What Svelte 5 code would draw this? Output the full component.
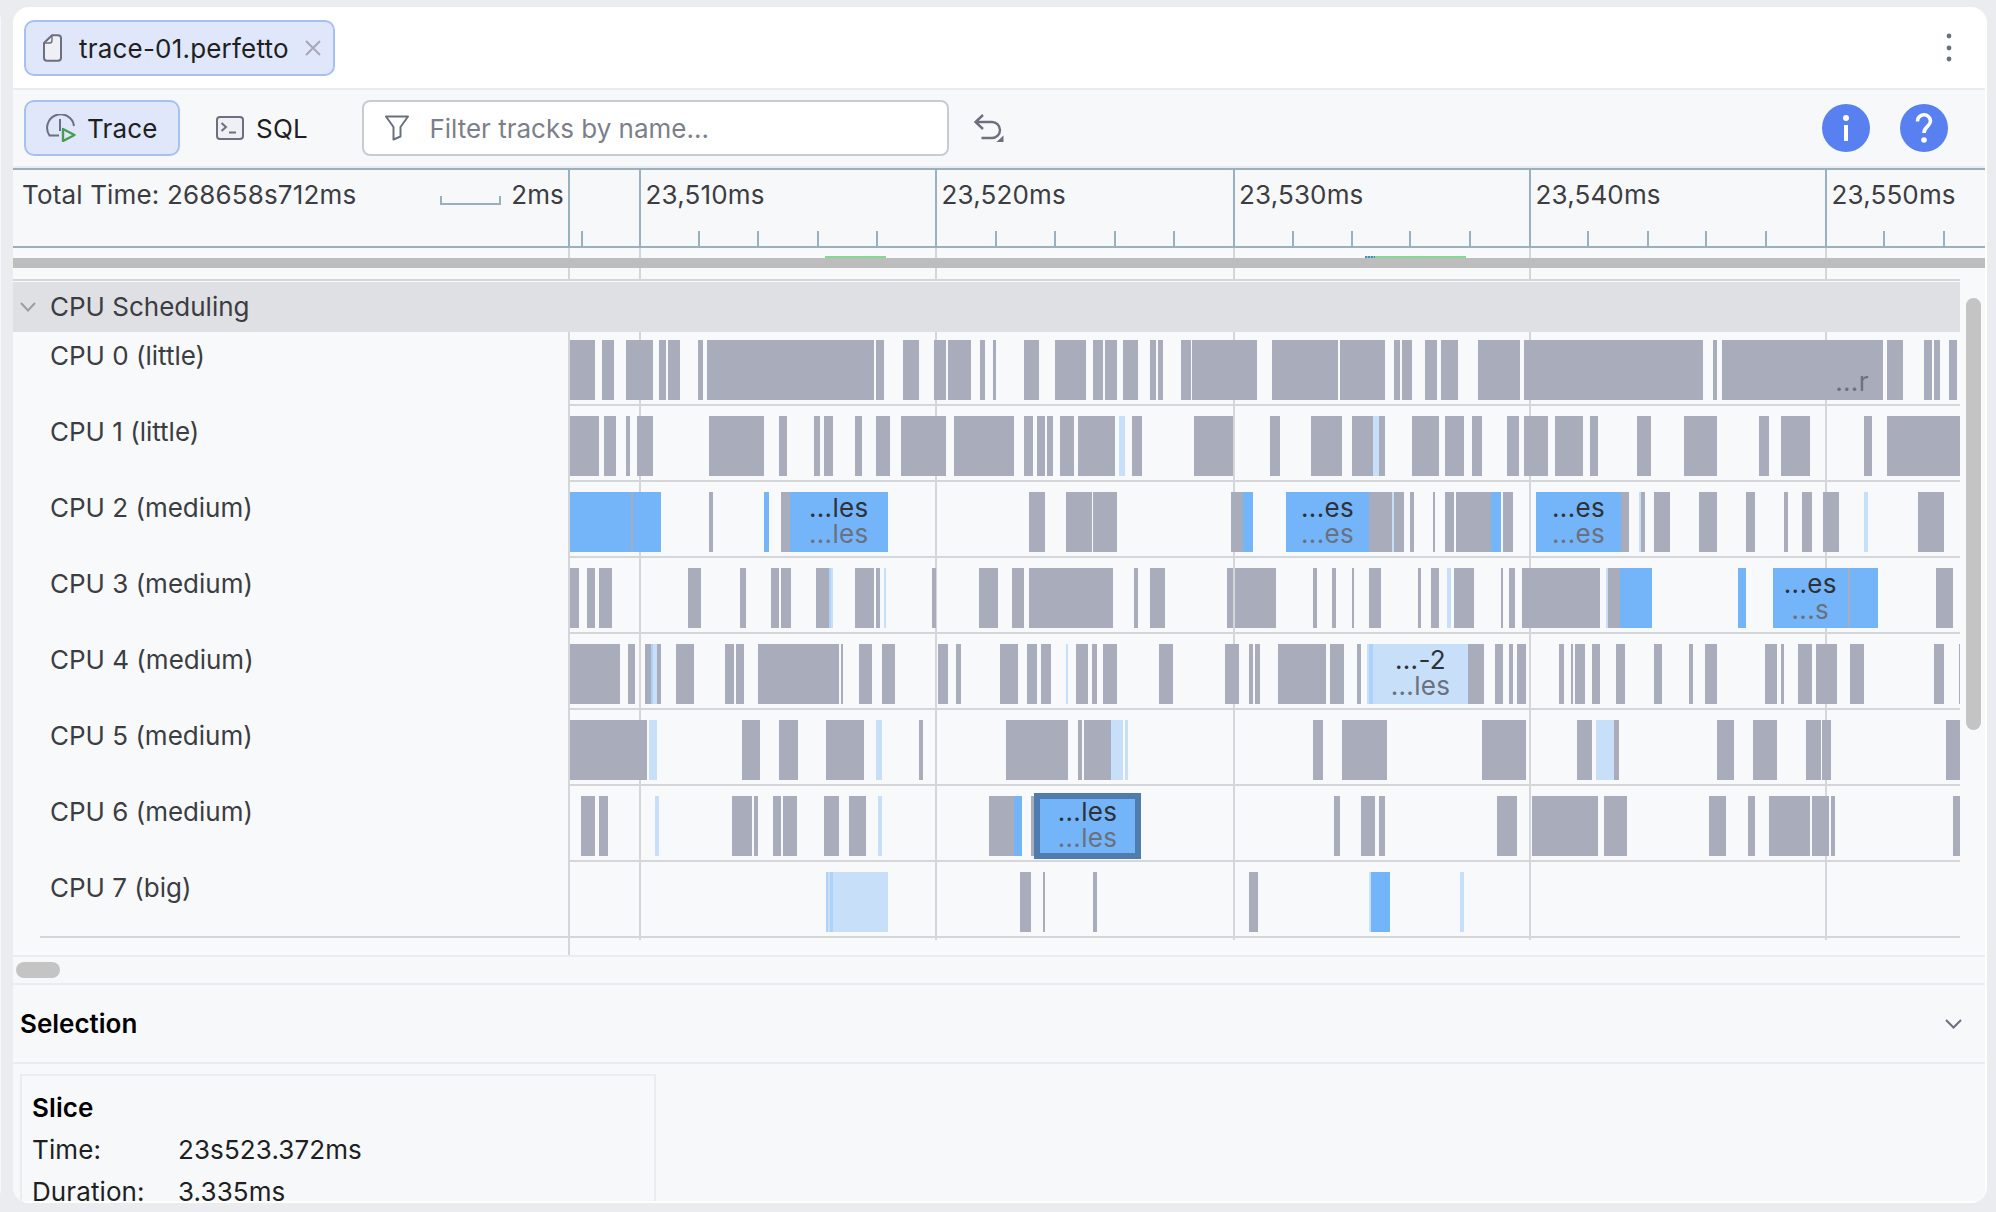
<script lang="ts">
  // page x of the left edge of the track canvas; slice data below is in page px
  const origin = 568;

  const majors = [
    { x: 640, label: "23,510ms" },
    { x: 936, label: "23,520ms" },
    { x: 1233.5, label: "23,530ms" },
    { x: 1530, label: "23,540ms" },
    { x: 1826, label: "23,550ms" },
  ];
  const minors = [
    581.6, 699, 758, 817.5, 877, 996, 1055, 1114.5, 1174, 1292.5, 1351.5, 1410,
    1470, 1588, 1648, 1705.6, 1766, 1884, 1944,
  ];

  type Slice = [number, number, string?, string?, string?];
  const g = "g", b = "b", l = "l", m = "m";

  const tracks: { name: string; slices: Slice[] }[] = [
    { name: "CPU 0 (little)", slices: [
      [570,595],[602,614],[626,653],[659,666],[668,680],[698,703],[707,874],[876,884],[903,919],
      [934,946],[948,971],[980,985],[993,996],[1024,1039],[1055,1086],[1093,1103],[1105,1117],
      [1123,1138],[1150,1156],[1158,1163],[1181,1191],[1192,1257],[1272,1338],[1340,1385],
      [1394,1400],[1402,1412],[1425,1437],[1441,1458],[1478,1520],[1524,1703],[1713,1717],
      [1722,1821],[1821,1883,g,"","...r"],[1887,1903],[1924,1932],[1934,1940],[1949,1957],
    ]},
    { name: "CPU 1 (little)", slices: [
      [570,599],[604,616],[626,630],[637,653],[709,764],[779,787],[814,820],[824,833],[855,862],
      [876,890],[901,946],[954,1014],[1024,1033],[1037,1045],[1047,1053],[1060,1074],[1078,1115],
      [1119,1125,l],[1132,1142],[1194,1233],[1270,1280],[1311,1342],[1352,1373],[1373,1379,l],
      [1379,1385],[1412,1439],[1445,1464],[1472,1482],[1507,1519],[1524,1548],[1555,1583],
      [1590,1598],[1637,1651],[1684,1717],[1759,1769],[1781,1810],[1864,1872],[1887,1960],
    ]},
    { name: "CPU 2 (medium)", slices: [
      [570,630.5,b],[630.5,633],[633,661,b],[709,713],[764,769,b],[781,789.5],
      [789.5,888,b,"...les","...les"],[1029,1045],[1066,1092],[1093,1117],[1231,1243],[1243,1253,b],
      [1286,1369,b,"...es","...es"],[1369,1392],[1392,1393.5,l],[1393.5,1404],[1410,1414],[1433,1435],
      [1445,1454],[1456,1491],[1491,1501,b],[1503,1513],[1536,1621,b,"...es","...es"],[1621,1629],
      [1639,1641,l],[1641,1645],[1654,1670],[1699,1717],[1746,1755],[1784,1788],[1802,1812],
      [1823,1839],[1864,1868,l],[1918,1944],
    ]},
    { name: "CPU 3 (medium)", slices: [
      [570,579],[587,595],[599,612],[688,701],[740,746],[771,779],[781,791],[816,829],[829,831,m],
      [831,833,l],[855,874],[876,880],[884,886,l],[932,936],[979,998],[1012,1024],[1029,1113],
      [1134,1138],[1150,1165],[1227,1233],[1234.5,1276],[1313,1317],[1332,1336],[1352,1354],
      [1369,1381],[1418,1421],[1431,1439],[1447,1451,l],[1454,1474],[1501,1503],[1509,1515],
      [1522,1600],[1606,1608,l],[1608,1620],[1620,1652,b],[1738,1746,b],
      [1773,1847.5,b,"...es","...s"],[1847.5,1850],[1850,1878,b],[1936,1953],
    ]},
    { name: "CPU 4 (medium)", slices: [
      [570,620],[628,635],[645,651],[651,653,m],[653,657,l],[657,661],[676,694],[725,734],[736,744],
      [758,839],[841,843],[859,872],[882,895],[938,948],[956,961],[1000,1018],[1027,1037],[1041,1051],
      [1066,1068,l],[1076,1088],[1092,1097],[1103,1117],[1159,1173],[1225,1239],[1249,1253],
      [1255,1260],[1278,1326],[1330,1344],[1357,1361],[1367,1369,l],[1369,1373,m],
      [1373,1468,l,"...-2","...les"],[1468,1484],[1495,1503],[1509,1513],[1517,1526],[1559,1564],
      [1571,1573],[1575,1585],[1592,1600],[1616,1625],[1654,1662],[1689,1693],[1705,1717],
      [1765,1777],[1781,1784],[1798,1812],[1816,1837],[1850,1864],[1934,1944],[1959,1960],
    ]},
    { name: "CPU 5 (medium)", slices: [
      [570,647],[649,657,l],[742,760],[779,798],[826,864],[876,882,l],[919,923],[1006,1068],
      [1078,1082],[1084,1111],[1111,1123,l],[1125,1128,l],[1313,1323],[1342,1387],[1482,1526],
      [1577,1592],[1596,1614,l],[1614,1619],[1717,1734],[1753,1777],[1806,1821],[1822,1831],
      [1946,1960],
    ]},
    { name: "CPU 6 (medium)", slices: [
      [581,595],[599,608],[655,659,l],[732,752],[754,758],[773,781],[783,797],[824,839],[849,866],
      [878,882,l],[989,1014],[1014,1022,b],[1031,1034],[1034,1141,"sel","...les","...les"],
      [1334,1340],[1361,1375],[1379,1385],[1497,1517],[1532,1598],[1604,1627],[1709,1726],
      [1748,1755],[1769,1810],[1812,1829],[1831,1835],[1953,1960],
    ]},
    { name: "CPU 7 (big)", slices: [
      [826,828,m],[828,830,l],[830,833,m],[833,888,l],[1020,1031],[1043,1045],[1093,1097],[1249,1258],
      [1369,1371,l],[1371,1390,b],[1460,1464,l],
    ]},
  ];
</script>

<div class="page">
  <div class="neighbor"></div>
  <main class="card">
    <header class="tabbar">
      <div class="tab">
        <svg width="19" height="28" viewBox="0 0 19 28" fill="#eef0f5" stroke="#6c707e" stroke-width="2">
          <path d="M9 1.2H15a3 3 0 0 1 3 3V23.8a3 3 0 0 1-3 3H4a3 3 0 0 1-3-3V9Z" stroke-linejoin="round" />
          <path d="M9 1.2V6.5a2.5 2.5 0 0 1-2.5 2.5H1" fill="none" stroke-width="1.4" />
        </svg>
        <span class="tab-name">trace-01.perfetto</span>
        <svg class="close" width="16" height="16" viewBox="0 0 16 16" stroke="#a6a9b4" stroke-width="2">
          <path d="M1 1L15 15M15 1L1 15" />
        </svg>
      </div>
      <svg class="kebab" width="6" height="30" viewBox="0 0 6 30" fill="#6c707e">
        <circle cx="3" cy="3" r="2.4" /><circle cx="3" cy="15" r="2.4" /><circle cx="3" cy="26" r="2.4" />
      </svg>
    </header>

    <div class="toolbar">
      <button class="mode active" type="button">
        <svg width="31" height="28" viewBox="0 0 31 28" fill="none">
          <path d="M14 21.5H4.5A13.5 13.5 0 1 1 29 12" stroke="#6c707e" stroke-width="2" />
          <path d="M15 5V17" stroke="#6c707e" stroke-width="2" />
          <path d="M18 15L29.5 21L18 27Z" stroke="#4a9a52" stroke-width="2.4" fill="#e0e7fb" stroke-linejoin="round" />
        </svg>
        <span>Trace</span>
      </button>
      <button class="mode" type="button">
        <svg width="28" height="24" viewBox="0 0 28 24" fill="none" stroke="#6c707e" stroke-width="2">
          <rect x="1" y="1" width="26" height="22" rx="3" fill="#eef0f5" />
          <path d="M5.5 7L10 11L5.5 15M13 16.5H20" />
        </svg>
        <span>SQL</span>
      </button>
      <label class="filter">
        <svg width="24" height="26" viewBox="0 0 24 26" fill="none" stroke="#6c707e" stroke-width="2">
          <path d="M1 1.5H23L15.5 12V21.5L8.5 24.5V12Z" stroke-linejoin="round" />
        </svg>
        <span class="placeholder">Filter tracks by name...</span>
      </label>
      <svg class="undo" width="30" height="28" viewBox="0 0 30 28" fill="none" stroke="#6c707e" stroke-width="2.4">
        <path d="M9 1L1.5 8L9 15M2 8H18A8 8 0 0 1 18 24H7.5" />
        <path d="M29.5 21.5V28H22.5Z" fill="#6c707e" stroke="none" />
      </svg>
      <span class="spacer"></span>
      <svg width="48" height="48" viewBox="0 0 48 48">
        <circle cx="24" cy="24" r="24" fill="#5880f0" />
        <circle cx="24" cy="14" r="3" fill="#fff" />
        <path d="M24 21V37" stroke="#fff" stroke-width="4" />
      </svg>
      <svg class="help" width="48" height="48" viewBox="0 0 48 48" fill="none">
        <circle cx="24" cy="24" r="24" fill="#5880f0" />
        <path d="M17.5 17.5A6.5 6.5 0 0 1 30.5 17C30.5 22.5 24 22.5 24 29" stroke="#fff" stroke-width="3.6" />
        <circle cx="24" cy="36" r="2.8" fill="#fff" />
      </svg>
    </div>

    <section class="ruler">
      <div class="ruler-info">
        <span>Total Time: 268658s712ms</span>
        <span class="scale"><i></i>2ms</span>
      </div>
      <div class="axis">
        {#each majors as t}
          <span class="major" style="left:{t.x - origin - 3}px"><em>{t.label}</em></span>
        {/each}
        {#each minors as x}
          <span class="minor" style="left:{x - origin - 3}px"></span>
        {/each}
      </div>
    </section>

    <section class="timeline">
      <span class="divider"></span>
      {#each majors as t}
        <span class="gridline" style="left:{t.x - 13}px"></span>
      {/each}

      <div class="overview">
        <span class="mark" style="left:{825 - 13}px;width:61px"></span>
        <span class="mark dots" style="left:{1365 - 13}px;width:10px"></span>
        <span class="mark" style="left:{1375 - 13}px;width:91px"></span>
      </div>
      <div class="overview-bar"></div>

      <div class="group">
        <svg width="16" height="10" viewBox="0 0 16 10" fill="none" stroke="#9a9ca6" stroke-width="2">
          <path d="M1 1L8 8.5L15 1" />
        </svg>
        <span>CPU Scheduling</span>
      </div>

      {#each tracks as track}
        <div class="track">
          <div class="track-name">{track.name}</div>
          <div class="canvas">
            {#each track.slices as [start, end, kind = "g", title, sub]}
              <div class="slice {kind}" style="left:{start - origin}px;width:{end - start}px">
                {#if title !== undefined}
                  <span class="title">{title}</span>
                  <span class="sub">{sub}</span>
                {/if}
              </div>
            {/each}
          </div>
        </div>
      {/each}

      <span class="vscroll"></span>
    </section>

    <div class="hscroll"><span></span></div>

    <div class="selection-head">
      <strong>Selection</strong>
      <svg width="17" height="10" viewBox="0 0 17 10" fill="none" stroke="#6c707e" stroke-width="2">
        <path d="M1 1L8.5 8.5L16 1" />
      </svg>
    </div>

    <div class="details">
      <div class="slice-box">
        <strong>Slice</strong>
        <dl>
          <dt>Time:</dt><dd>23s523.372ms</dd>
          <dt>Duration:</dt><dd>3.335ms</dd>
        </dl>
      </div>
    </div>
  </main>
</div>

<style>
  :global(body) {
    margin: 0;
    background: #ebecf0;
    font-family: Inter, "Noto Sans", sans-serif;
    font-size: 26px;
    color: #1e1f22;
  }

  .page {
    display: flex;
    height: 1212px;
    box-sizing: border-box;
    padding: 7px 9px 9px 0;
    overflow: hidden;
  }

  .neighbor {
    width: 1px;
    margin: 10px 12px 10px 0;
    background: #f7f8fa;
  }

  .card {
    flex: 1;
    min-width: 0;
    display: flex;
    flex-direction: column;
    padding: 0 2px 2px 0;
    background: #fff;
    border-radius: 16px;
    overflow: hidden;
  }

  .tabbar {
    flex: none;
    height: 81px;
    display: flex;
    align-items: center;
    justify-content: space-between;
    padding: 0 33px 0 11px;
    border-bottom: 2px solid #ebecf0;
  }

  .tab {
    width: 311px;
    height: 56px;
    box-sizing: border-box;
    display: flex;
    align-items: center;
    padding-left: 17px;
    background: #e0e7fb;
    border: 2px solid #a8c0f0;
    border-radius: 10px;
  }
  .tab-name {
    margin-left: 17px;
    padding-top: 2px;
    letter-spacing: 0.2px;
    white-space: nowrap;
  }
  .close {
    margin-left: 16px;
    flex: none;
  }

  .toolbar {
    flex: none;
    height: 76px;
    display: flex;
    align-items: center;
    padding: 0 37.5px 0 11px;
    background: #f7f8fa;
    border-bottom: 2px solid #ebecf0;
  }

  .mode {
    height: 56px;
    display: flex;
    align-items: center;
    justify-content: flex-start;
    gap: 12px;
    padding: 0 24px 0 19px;
    background: none;
    border: 2px solid transparent;
    border-radius: 10px;
    font: inherit;
    letter-spacing: 0.2px;
    color: inherit;
  }
  .mode svg {
    flex: none;
  }
  .mode.active {
    width: 156px;
    padding: 0 0 0 19px;
    gap: 11px;
    background: #e0e7fb;
    border-color: #a8c0f0;
  }
  .mode + .mode {
    margin-left: 15px;
    gap: 12px;
  }

  .filter {
    width: 587px;
    height: 56px;
    box-sizing: border-box;
    margin-left: 28.5px;
    display: flex;
    align-items: center;
    gap: 20px;
    padding-left: 21px;
    background: #fff;
    border: 2px solid #c9cbd4;
    border-radius: 8px;
  }
  .placeholder {
    color: #7c7f8a;
  }

  .undo {
    margin-left: 25px;
  }
  .spacer {
    flex: 1;
  }
  .help {
    margin-left: 30px;
  }

  .ruler {
    flex: none;
    height: 80px;
    box-sizing: border-box;
    display: flex;
    background: #f7f8fa;
    border-top: 2px solid #9bb0bf;
    border-bottom: 2px solid #9bb0bf;
    color: #3b3d42;
    letter-spacing: 0.16px;
  }
  .ruler-info {
    width: 555px;
    flex: none;
    box-sizing: border-box;
    display: flex;
    justify-content: space-between;
    padding: 9px 4px 0 9px;
    line-height: 32px;
  }
  .scale {
    display: flex;
    gap: 10.5px;
  }
  .scale i {
    width: 61px;
    height: 9px;
    margin-top: 17px;
    box-sizing: border-box;
    border: 2px solid #9bb0bf;
    border-top: none;
  }

  .axis {
    flex: 1;
    position: relative;
    border-left: 2px solid #9bb0bf;
  }
  .major {
    position: absolute;
    top: 0;
    bottom: -2px;
    width: 2px;
    background: #9bb0bf;
  }
  .major em {
    position: absolute;
    left: 6.5px;
    top: 9px;
    font-style: normal;
    line-height: 32px;
    white-space: nowrap;
  }
  .minor {
    position: absolute;
    bottom: -2px;
    height: 17px;
    width: 2px;
    background: #9bb0bf;
  }

  .timeline {
    flex: none;
    height: 707px;
    position: relative;
    background: #f8f9fb;
    border-bottom: 2px solid #ebecf0;
  }
  .divider,
  .gridline {
    position: absolute;
    top: 0;
    width: 2px;
    background: #d5d6da;
  }
  .divider {
    left: 555px;
    bottom: 0;
  }
  .gridline {
    height: 692px;
    margin-left: -1px;
  }

  .overview {
    height: 10px;
    position: relative;
  }
  .mark {
    position: absolute;
    top: 8px;
    height: 2px;
    background: #86d993;
  }
  .mark.dots {
    background: repeating-linear-gradient(90deg, #3f8fd0 0 2px, #86d993 2px 3px);
  }
  .overview-bar {
    height: 10px;
    position: relative;
    background: #bdbdbd;
  }

  .group {
    position: relative;
    height: 50px;
    box-sizing: border-box;
    margin: 14px 25px 0 0;
    display: flex;
    align-items: center;
    gap: 14px;
    padding: 0 0 1px 7px;
    background: #dfe0e4;
    box-shadow: 0 -1px 0 #f8f9fb, 0 -3px 0 #d5d6da;
    color: #3b3d42;
  }

  .track {
    position: relative;
    display: flex;
    height: 76px;
    margin: 0 25px 0 27px;
    box-sizing: border-box;
  }
  .group + .track {
    height: 74px;
  }
  .track:last-of-type {
    border-bottom: 2px solid #d5d6da;
  }

  .track-name {
    width: 528px;
    flex: none;
    box-sizing: border-box;
    padding: 10px 0 0 10px;
    line-height: 32px;
    color: #3b3d42;
  }
  .group + .track .track-name {
    padding-top: 8px;
  }

  .canvas {
    flex: 1;
    position: relative;
    border-bottom: 2px solid #d5d6da;
  }
  .track:last-of-type .canvas {
    border-bottom: none;
  }

  .slice {
    position: absolute;
    top: 10px;
    height: 60px;
    box-sizing: border-box;
    display: flex;
    flex-direction: column;
    align-items: center;
    padding-top: 3px;
    line-height: 26px;
    letter-spacing: 0.3px;
    overflow: hidden;
    white-space: nowrap;
  }
  .group + .track .slice {
    top: 8px;
  }
  .g { background: #a9adbb; }
  .b { background: #74b5f9; }
  .l { background: #c7dff9; }
  .m { background: #aed3fa; }
  .sel {
    top: 7px;
    height: 66px;
    padding-top: 0;
    background: #74b5f9;
    border: 6px solid #4f7cac;
    z-index: 1;
    overflow: visible;
  }
  .title {
    height: 26px;
    color: #2f3138;
  }
  .sub {
    color: #6b7080;
  }

  .vscroll {
    position: absolute;
    left: 1953px;
    top: 50px;
    width: 15px;
    height: 432px;
    background: #c4c4c4;
    border-radius: 8px;
  }

  .hscroll {
    flex: none;
    height: 28px;
    box-sizing: border-box;
    padding: 5px 0 0 3px;
    background: #f7f8fa;
    border-bottom: 2px solid #ebecf0;
  }
  .hscroll span {
    display: block;
    width: 44px;
    height: 16px;
    background: #c4c4c4;
    border-radius: 8px;
  }

  .selection-head {
    flex: none;
    height: 79px;
    box-sizing: border-box;
    display: flex;
    align-items: center;
    justify-content: space-between;
    padding: 0 23px 0 7px;
    background: #f7f8fa;
    border-bottom: 2px solid #ebecf0;
  }
  strong {
    font-weight: 600;
    color: #000;
  }

  .details {
    flex: 1;
    min-height: 0;
    padding: 10px 0 0 7px;
    background: #f7f8fa;
    overflow: hidden;
  }
  .slice-box {
    width: 636px;
    height: 200px;
    box-sizing: border-box;
    padding: 16px 10px;
    border: 2px solid #ebecf0;
    line-height: 32px;
    letter-spacing: 0.1px;
  }
  dl {
    display: grid;
    grid-template-columns: 146px 1fr;
    row-gap: 10px;
    margin: 10px 0 0;
    color: #1e1f22;
  }
  dd {
    margin: 0;
  }
</style>
